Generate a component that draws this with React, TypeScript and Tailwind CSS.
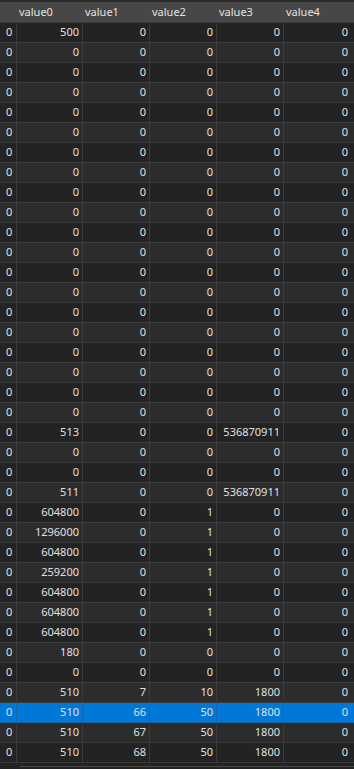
import React from 'react';

type Row = [number, number, number, number, number];

const buildRows = (): Row[] => {
  const rows: Row[] = [];
  rows.push([500, 0, 0, 0, 0]);
  for (let i = 0; i < 19; i++) rows.push([0, 0, 0, 0, 0]);
  rows.push([513, 0, 0, 536870911, 0]);
  rows.push([0, 0, 0, 0, 0]);
  rows.push([0, 0, 0, 0, 0]);
  rows.push([511, 0, 0, 536870911, 0]);
  rows.push([604800, 0, 1, 0, 0]);
  rows.push([1296000, 0, 1, 0, 0]);
  rows.push([604800, 0, 1, 0, 0]);
  rows.push([259200, 0, 1, 0, 0]);
  rows.push([604800, 0, 1, 0, 0]);
  rows.push([604800, 0, 1, 0, 0]);
  rows.push([604800, 0, 1, 0, 0]);
  rows.push([180, 0, 0, 0, 0]);
  rows.push([0, 0, 0, 0, 0]);
  rows.push([510, 7, 10, 1800, 0]);
  rows.push([510, 66, 50, 1800, 0]);
  rows.push([510, 67, 50, 1800, 0]);
  rows.push([510, 68, 50, 1800, 0]);
  return rows;
};

const SELECTED = 34;
const columns = ['value0', 'value1', 'value2', 'value3', 'value4'];
const grid = 'grid grid-cols-[17px_66px_67px_67px_67px_1fr]';

export default function App() {
  const rows = buildRows();

  return (
    <div
      className="w-[354px] h-[769px] overflow-hidden bg-[#232323] text-[11px] text-[#dedede]"
      style={{ fontFamily: '"Noto Sans", "Open Sans", sans-serif' }}
    >
      <div className="h-[2px] bg-[#2b2b2b]" />
      <div className={`${grid} h-[21px] bg-[#474747] border-b border-[#3a3a3a] text-[#e2e2e2]`}>
        <div />
        {columns.map(c => (
          <div key={c} className="flex items-center pl-[2px]">
            {c}
          </div>
        ))}
      </div>
      {rows.map((row, i) => {
        const selected = i === SELECTED;
        const bg = selected ? 'bg-[#0078d7]' : i % 2 === 1 ? 'bg-[#2c2c2c]' : 'bg-[#232323]';
        const line = selected ? 'border-[#1565a8]' : 'border-[#3a3a3a]';
        return (
          <div key={i} className={`${grid} h-[20px] ${bg} text-[#e0e0e0]`}>
            <div className={`flex items-center pl-[6px] border-r border-b ${line}`}>0</div>
            {row.map((v, j) => (
              <div
                key={j}
                className={`flex items-center justify-end pr-[3px] border-b ${line} ${j < 4 ? 'border-r' : 'pr-[6px]'}`}
              >
                {v}
              </div>
            ))}
          </div>
        );
      })}
      <div className="h-[6px] bg-[#232323] flex items-center pl-[20px]">
        <div className="h-[1px] w-full bg-[#4a4a4a]" />
      </div>
    </div>
  );
}
